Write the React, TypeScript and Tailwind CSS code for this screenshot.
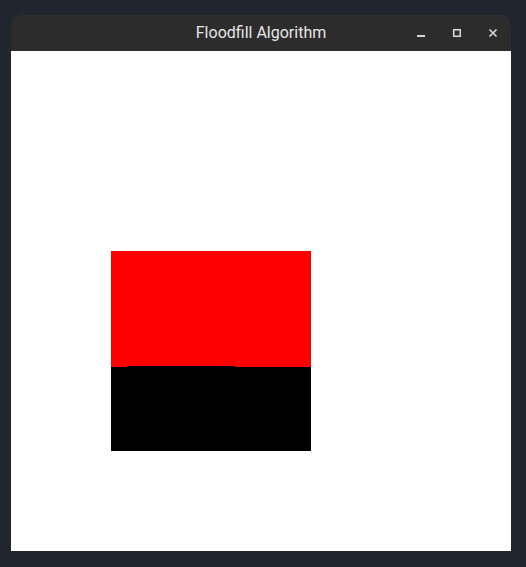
import React from "react";

// Window chrome button glyphs
const Minimize = () => (
  <svg width="10" height="10" viewBox="0 0 10 10">
    <rect x="1" y="7" width="8" height="2" fill="#d6d6d6" />
  </svg>
);

const Maximize = () => (
  <svg width="10" height="10" viewBox="0 0 10 10">
    <rect x="1.75" y="1.75" width="6.5" height="6.5" fill="none" stroke="#d6d6d6" strokeWidth="1.6" />
  </svg>
);

const Close = () => (
  <svg width="10" height="10" viewBox="0 0 10 10">
    <path d="M1.5 1.5 L8.5 8.5 M8.5 1.5 L1.5 8.5" stroke="#d6d6d6" strokeWidth="1.7" />
  </svg>
);

const App: React.FC = () => {
  return (
    <div className="w-[526px] h-[567px] bg-[#21252e] pt-[15px] pl-[11px]">
      <div className="w-[500px]">
        {/* Title bar */}
        <div className="relative h-[36px] bg-[#2c2c2c] rounded-t-[10px] flex items-center justify-center">
          <span className="text-[16px] text-[#e6e6e6] font-['Roboto',sans-serif]">Floodfill Algorithm</span>
          <div className="absolute right-0 top-0 h-full flex items-center">
            <div className="w-[36px] flex justify-center"><Minimize /></div>
            <div className="w-[36px] flex justify-center"><Maximize /></div>
            <div className="w-[36px] flex justify-center"><Close /></div>
          </div>
        </div>
        {/* Canvas */}
        <div className="h-[500px] bg-white pt-[200px] pl-[100px]">
          <div className="w-[200px] flex flex-col">
            <div className="h-[115px] bg-[#ff0000]" />
            <div className="h-[1px] flex">
              <div className="w-[16px] bg-[#ff0000]" />
              <div className="w-[108px] bg-black" />
              <div className="flex-1 bg-[#ff0000]" />
            </div>
            <div className="h-[84px] bg-black" />
          </div>
        </div>
      </div>
    </div>
  );
};

export default App;
